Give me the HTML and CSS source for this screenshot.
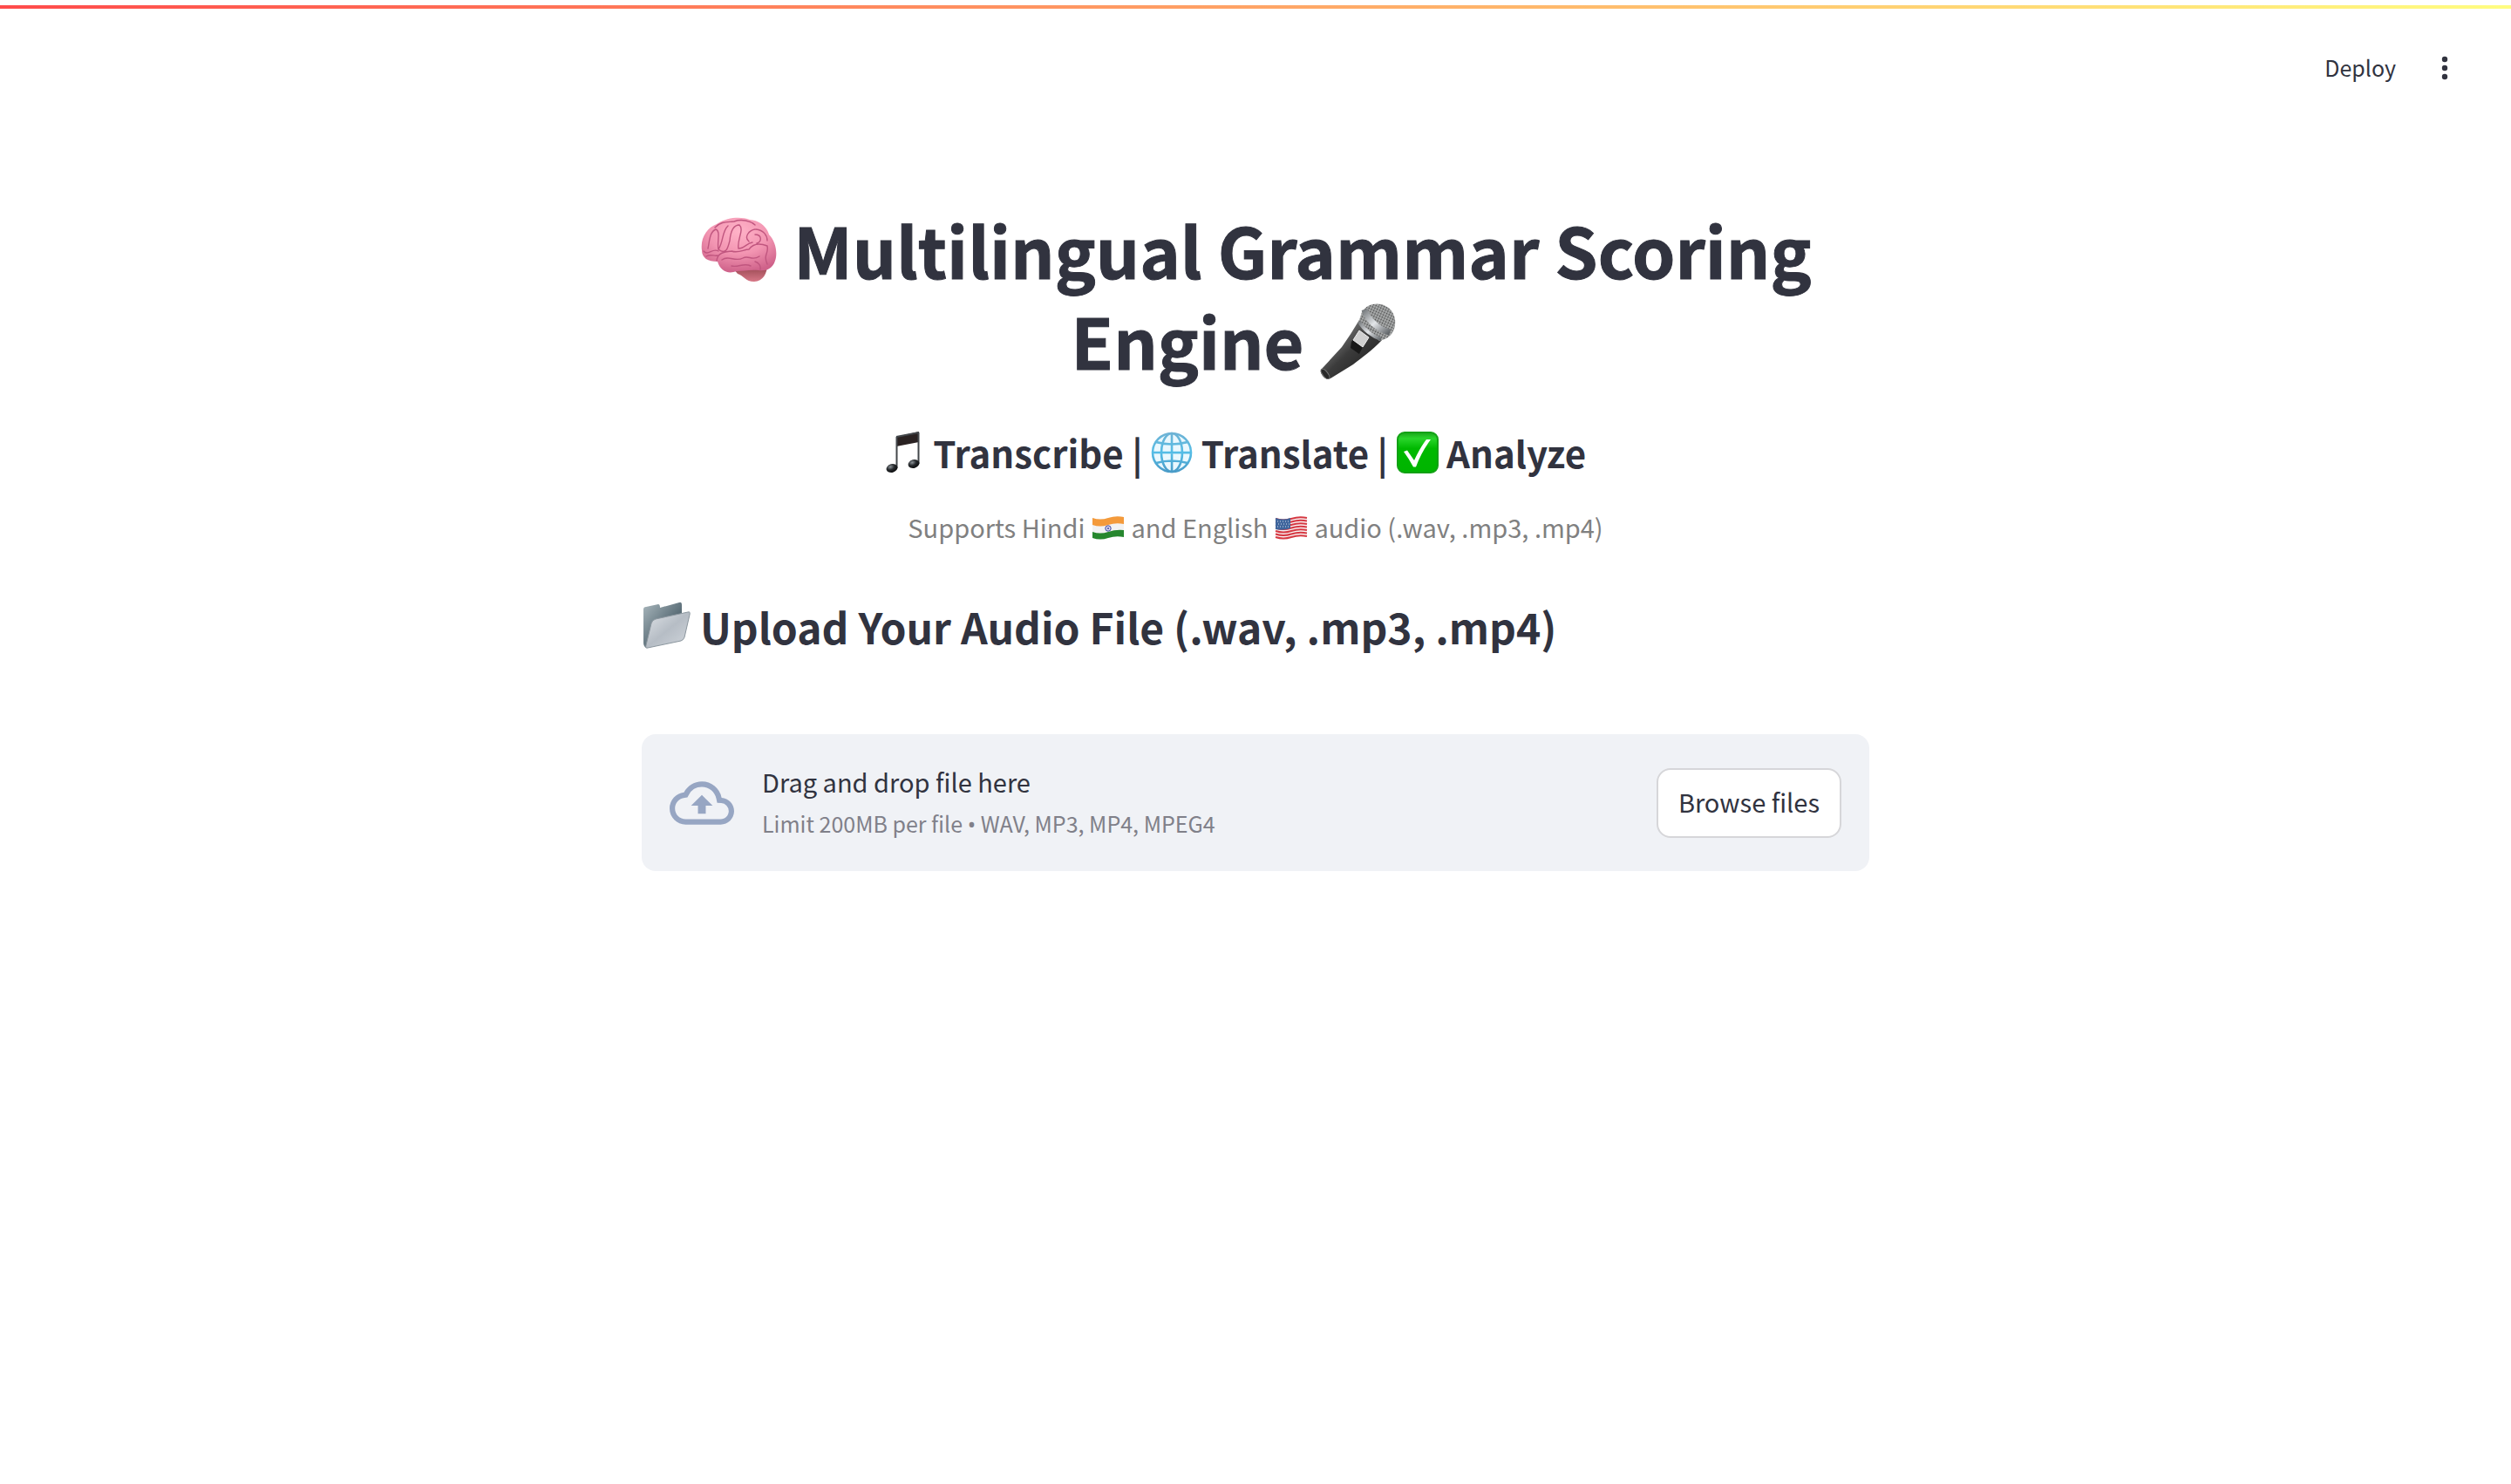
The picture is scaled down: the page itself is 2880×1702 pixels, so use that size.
FILE: index.html
```html
<!DOCTYPE html>
<html lang="en">
<head>
<meta charset="utf-8">
<meta name="viewport" content="width=device-width, initial-scale=1">
<title>Multilingual Grammar Scoring Engine</title>
<link rel="stylesheet" href="styles.css">
</head>
<body>
<div class="decoration"></div>
<header class="toolbar">
  <button class="deploy" type="button">Deploy</button>
  <button class="menu" type="button" aria-label="Main menu">
    <svg viewBox="0 0 32 32" aria-hidden="true"><circle cx="16" cy="6" r="3.2"/><circle cx="16" cy="16" r="3.2"/><circle cx="16" cy="26" r="3.2"/></svg>
  </button>
</header>
<main class="content">
  <h1 class="title"><span class="anchored"><svg class="emoji" viewBox="0 0 90 90" role="img" aria-label="brain">
    <defs>
      <radialGradient id="pink" cx=".5" cy=".25" r=".75"><stop offset="0" stop-color="#ffb3c8"/><stop offset=".55" stop-color="#f294b1"/><stop offset="1" stop-color="#cf628a"/></radialGradient>
      <linearGradient id="stem" x1="0" y1="0" x2="0" y2="1"><stop offset="0" stop-color="#8d4148"/><stop offset="1" stop-color="#d77787"/></linearGradient>
    </defs>
    <path fill="url(#stem)" d="M38 66C52 64 66 60 78 63 78 72 73 82 63 82 53 82 51 75 44 73Z"/>
    <path fill="url(#pink)" d="M3 46C1 32 9 20 20 16 31 8 48 7 58 11 70 12 78 20 80 28 88 36 90 50 87 58 84 68 76 70 68 69 58 68 50 70 43 70 32 74 24 69 21 59 10 59 3 55 3 46Z"/>
    <g fill="none" stroke="#c0567f" stroke-width="1.4" stroke-linecap="round">
      <path d="M10 44C12 34 12 25 19 22 25 24 20 37 22 45M22 45C28 36 26 24 33 18M5 47C10 53 15 43 22 47M22 45C31 52 33 43 35 35M35 35C36 24 39 17 46 17M46 17C52 22 43 34 45 44M45 44C52 44 54 38 61 37M57 36C51 31 57 23 64 22M65 22C74 23 78 29 78 35M64 28C72 28 72 36 66 38M18 20C25 12 34 14 40 13M40 13C48 10 59 12 64 17M20 58C21 49 28 48 37 47M37 47C45 50 51 45 57 45M57 45C62 38 70 38 78 41M78 41C80 51 73 50 78 62M26 57C34 51 41 60 50 55M50 55C57 51 60 59 69 53M37 64C45 66 51 60 59 64M8 53C13 50 17 53 21 52M64 59C68 60 71 64 70 68"/>
    </g>
  </svg> Multilingual Grammar Scoring Engine <svg class="emoji" viewBox="0 0 90 90" role="img" aria-label="microphone">
    <defs>
      <linearGradient id="barrel" x1="0" y1="0" x2="1" y2="1"><stop offset=".25" stop-color="#777"/><stop offset=".5" stop-color="#3c3c3c"/><stop offset=".75" stop-color="#292929"/></linearGradient>
      <linearGradient id="metal" x1="0" y1="0" x2="1" y2="1"><stop offset="0" stop-color="#777b7e"/><stop offset=".5" stop-color="#e3e6e9"/><stop offset="1" stop-color="#62666a"/></linearGradient>
      <pattern id="mesh" width="3" height="3" patternUnits="userSpaceOnUse" patternTransform="rotate(25)"><path fill="#aeb0b1" d="M0 0H3V3H0Z"/><circle cx="1.5" cy="1.5" r=".9" fill="#454545"/></pattern>
    </defs>
    <path fill="url(#barrel)" d="M46 22 72 45C61 57 49 65 39 73L13 89Q8 91 4 86 0 81 3 78L26 53Q36 39 46 22Z"/>
    <ellipse cx="7" cy="84" rx="3" ry="7" fill="#292929" stroke="#777" transform="rotate(-38 7 84)"/>
    <path fill="url(#mesh)" d="M49 13C57 0 76 1 84 13 91 25 86 40 75 44L69 46 45 25Z"/>
    <path fill="none" stroke="url(#metal)" stroke-width="7" d="M52 10C55 21 67 33 81 36"/>
    <path fill="none" stroke="url(#metal)" stroke-width="4" d="M46 24C51 33 61 41 71 44"/>
    <path fill="#191919" d="m37 47 7-8 9 8-7 14-10-7Z"/>
    <path fill="#d0d0d0" stroke="#eee" d="m46 34 11 8-7 11-11-8Z"/>
  </svg></span></h1>
  <h3 class="tagline"><span class="anchored"><svg class="emoji" viewBox="0 0 48 48" role="img" aria-label="music">
    <defs><radialGradient id="note" cx=".4" cy=".3" r=".7"><stop offset="0" stop-color="#8d9499"/><stop offset=".5" stop-color="#26292c"/><stop offset="1" stop-color="#0c0d0e"/></radialGradient></defs>
    <path fill="#2a2222" d="M15 6 41 0V12L15 17Z"/>
    <path fill="none" stroke="#43474b" stroke-width="2" d="M15.500 6V42M40.500 1V37M15 6 41 1"/>
    <ellipse cx="10" cy="42" rx="6.500" ry="4.800" fill="url(#note)" transform="rotate(-15 10 42)"/>
    <ellipse cx="35" cy="37" rx="6.500" ry="4.800" fill="url(#note)" transform="rotate(-15 35 37)"/>
  </svg> Transcribe | <svg class="emoji" viewBox="0 0 48 48" role="img" aria-label="globe">
    <defs><linearGradient id="sky" x1="0" y1="0" x2="0" y2="1"><stop offset="0" stop-color="#6eb3d5"/><stop offset=".5" stop-color="#55bde6"/><stop offset="1" stop-color="#4a9cc8"/></linearGradient></defs>
    <circle cx="24" cy="24" r="22" fill="#eaf8fe"/>
    <g fill="none" stroke="url(#sky)" stroke-width="2.6"><circle cx="24" cy="24" r="22"/><ellipse cx="24" cy="24" rx="12" ry="22"/><path d="M24 2 24.1 46M2 24 46 24.1M6 12Q24 17 42 12M6 36Q24 31 42 36"/></g>
  </svg> Translate | <svg class="emoji" viewBox="0 0 48 48" role="img" aria-label="check mark">
    <defs><linearGradient id="green" x1="0" y1="0" x2="0" y2="1"><stop offset="0" stop-color="#19a51a"/><stop offset=".15" stop-color="#29d52b"/><stop offset=".4" stop-color="#00b900"/><stop offset="1" stop-color="#00b400"/></linearGradient></defs>
    <rect x="1" y="1" width="46" height="46" rx="8" fill="url(#green)" stroke="#13a115" stroke-width="2"/>
    <path fill="#fff" d="M8 23 12 21.500 20 33Q27 18 34 9L39 9Q28 24 22 40.500H19Q14 31 8 23Z"/>
  </svg> Analyze</span></h3>
  <p class="support">Supports Hindi <svg class="emoji flag" viewBox="0 0 40 32" role="img" aria-label="India">
    <path fill="#f2f2f3" d="M2 5Q11 8 20 5T38 4V27Q29 25 20 28T2 28Z"/>
    <path fill="#f49a3b" d="M2 5Q11 8 20 5T38 4V12Q29 10 20 13T2 13Z"/>
    <path fill="#26872e" d="M2 21Q11 24 20 21T38 19V27Q29 25 20 28T2 28Z"/>
    <circle cx="20" cy="17" r="3.200" fill="#d4d4ef" stroke="#4149a0"/><circle cx="20" cy="17" r="1" fill="#4149a0"/>
  </svg> and English <svg class="emoji flag" viewBox="0 0 40 32" role="img" aria-label="United States">
    <path fill="#f8f2f2" d="M2 5Q11 8 20 5T38 4V27Q29 25 20 28T2 28Z"/>
    <path fill="none" stroke="#d63943" stroke-width="1.900" d="M2 6Q11 9 20 6T38 5M2 9.500Q11 12.500 20 9.500T38 8.500M2 13Q11 16 20 13T38 12M2 16.500Q11 19.500 20 16.500T38 15.500M2 20Q11 23 20 20T38 19M2 23.500Q11 26.500 20 23.500T38 22.500M2 27Q11 30 20 27T38 26"/>
    <path fill="#3f659c" d="M2 5Q11 8 19 5V17Q11 20 2 18Z"/>
    <path stroke="#d6e1ef" stroke-dasharray="1 2" d="M4 9H18M5 12H18M4 15H18"/>
  </svg> audio (.wav, .mp3, .mp4)</p>
  <h2 class="section"><svg class="emoji" viewBox="0 0 56 56" role="img" aria-label="folder">
    <defs>
      <linearGradient id="back" x1="0" y1="0" x2="1" y2="1"><stop offset="0" stop-color="#a9b7bd"/><stop offset=".6" stop-color="#586b75"/></linearGradient>
      <linearGradient id="front" x1="0" y1="0" x2="1" y2="1"><stop offset="0" stop-color="#dfe3e7"/><stop offset=".5" stop-color="#b6bdc5"/><stop offset="1" stop-color="#d1d6dc"/></linearGradient>
    </defs>
    <path fill="url(#back)" d="M2 9Q2 6 5 6L19 3Q21 3 21 7L43 1Q46 0 46 4V25L5 53Q2 51 2 47Z"/>
    <path fill="url(#front)" stroke="#8b969e" d="M11 25Q12 21 16 20L53 12Q56 11 55 15L49 41Q48 44 45 45L7 53Q4 54 5 50Z"/>
  </svg> Upload Your Audio File (.wav, .mp3, .mp4)</h2>
  <section class="uploader" aria-label="File upload">
    <svg class="cloud" viewBox="0 0 24 24" aria-hidden="true"><path d="M19.350 10.040A7.490 7.490 0 0 0 12 4C9.110 4 6.600 5.640 5.350 8.040A5.994 5.994 0 0 0 0 14c0 3.310 2.690 6 6 6h13c2.760 0 5-2.240 5-5 0-2.640-2.050-4.780-4.650-4.960zM19 18H6c-2.210 0-4-1.790-4-4 0-2.050 1.530-3.760 3.560-3.970l1.070-.11.5-.95A5.469 5.469 0 0 1 12 6c2.620 0 4.880 1.860 5.390 4.430l.3 1.500 1.530.11A2.980 2.980 0 0 1 22 15c0 1.650-1.350 3-3 3zM8 13h2.550v3h2.900v-3H16l-4-4z"/></svg>
    <div class="instructions">
      <span class="prompt">Drag and drop file here</span>
      <small class="limit">Limit 200MB per file <span class="bullet">•</span> WAV, MP3, MP4, MPEG4</small>
    </div>
    <button class="browse" type="button">Browse files</button>
  </section>
</main>
</body>
</html>
```
FILE: styles.css
```css
* { box-sizing: border-box; }

body {
  margin: 0;
  background: #fff;
  color: #31333f;
  font-family: "Noto Sans CJK SC", "Noto Sans", sans-serif;
  font-size: 29px;
  line-height: 48px;
}

h1, h2, h3, p { margin: 0; }

button { font: inherit; color: inherit; cursor: pointer; }

.decoration {
  height: 10px;
  border-top: 6px solid #fff;
  background: linear-gradient(90deg, #ff4b4b, #fffd80);
  background-origin: border-box;
}

.toolbar {
  display: flex;
  justify-content: flex-end;
  align-items: center;
  gap: 40px;
  height: 136px;
  padding: 0 60px 0 0;
}

.deploy, .menu {
  padding: 0;
  border: 0;
  background: none;
}

.deploy {
  padding-bottom: 2px;
  font-size: 25px;
}

.menu {
  display: flex;
  width: 32px;
  height: 32px;
}

.menu svg { width: 32px; height: 32px; fill: currentColor; }

.content {
  width: 100%;
  max-width: 1408px;
  margin: 0 auto;
  padding: 88px 0 80px;
}

.anchored { padding-right: 48px; }

.emoji {
  width: 90px;
  height: 90px;
  vertical-align: -11px;
}

.title {
  font-size: 79px;
  line-height: 104px;
  text-align: center;
  -webkit-text-stroke: 1px currentColor;
}

.tagline {
  margin-top: 48px;
  font-size: 42px;
  line-height: 58px;
  text-align: center;
}

.tagline .emoji { width: 48px; height: 48px; vertical-align: -6px; }

.support {
  margin-top: 32px;
  color: #808080;
  text-align: center;
}

.support .flag { width: 40px; height: 32px; vertical-align: -4px; }

.section {
  margin-top: 56px;
  font-size: 48px;
  line-height: 68px;
}

.section .emoji { width: 56px; height: 56px; vertical-align: -7px; }

.uploader {
  display: flex;
  align-items: center;
  gap: 32px;
  margin-top: 90px;
  padding: 30px 32px;
  border-radius: 16px;
  background: #f0f2f6;
}

.cloud { width: 74px; height: 74px; fill: #97a6c3; }

.instructions {
  display: flex;
  flex: 1;
  flex-direction: column;
}

.limit {
  color: #808089;
  font-size: 25px;
}

.bullet { font-family: "Noto Sans", sans-serif; }

.browse {
  height: 80px;
  padding: 0 23px 3px;
  border: 2px solid #d6d6d9;
  border-radius: 16px;
  background: #fff;
}
```
